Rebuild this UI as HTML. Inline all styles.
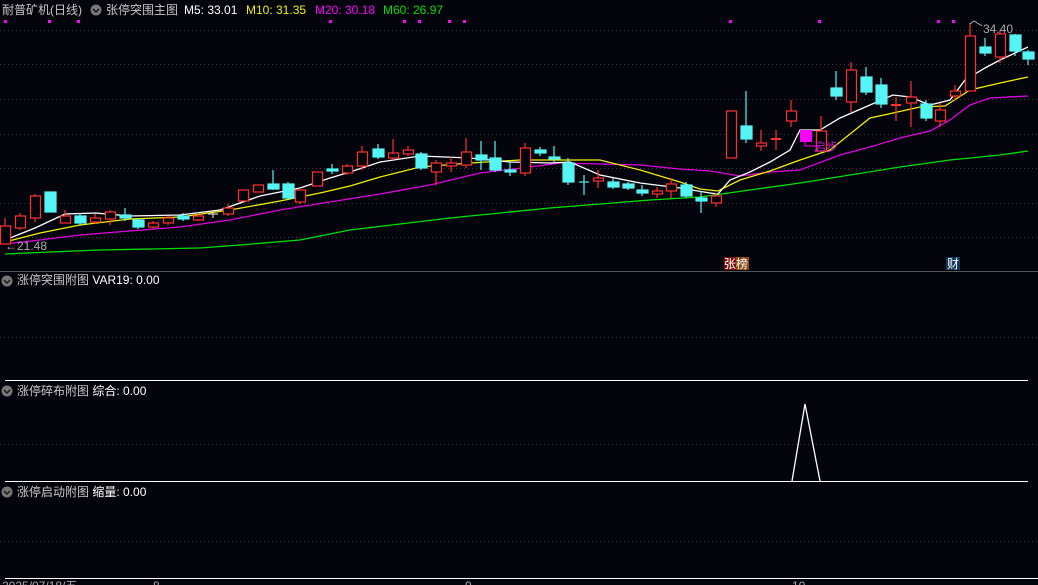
<!DOCTYPE html>
<html><head><meta charset="utf-8"><style>
html,body{margin:0;padding:0;background:#04040c;width:1038px;height:585px;overflow:hidden}
svg{display:block}
text{font-family:"Liberation Sans","Noto Sans CJK SC",sans-serif;font-size:12px}
</style></head><body>
<svg width="1038" height="585" viewBox="0 0 1038 585" xmlns="http://www.w3.org/2000/svg">
<rect width="1038" height="585" fill="#04040c"/>
<g stroke="#3a3a44" stroke-dasharray="1,3" stroke-width="1">
<line x1="0" y1="30.5" x2="1038" y2="30.5"/><line x1="0" y1="64.5" x2="1038" y2="64.5"/><line x1="0" y1="99.5" x2="1038" y2="99.5"/><line x1="0" y1="134.5" x2="1038" y2="134.5"/><line x1="0" y1="168.5" x2="1038" y2="168.5"/><line x1="0" y1="203.5" x2="1038" y2="203.5"/><line x1="0" y1="237.5" x2="1038" y2="237.5"/>
<line x1="0" y1="337.5" x2="1038" y2="337.5"/><line x1="0" y1="444.5" x2="1038" y2="444.5"/><line x1="0" y1="541.5" x2="1038" y2="541.5"/>
</g>
<line x1="0" y1="271.5" x2="1038" y2="271.5" stroke="#555"/>
<line x1="5" y1="380.5" x2="1028" y2="380.5" stroke="#fff"/>
<line x1="5" y1="481.5" x2="1028" y2="481.5" stroke="#fff"/>
<line x1="5" y1="578.5" x2="1038" y2="578.5" stroke="#fff"/>
<g fill="#ff00ff">
<rect x="4" y="20" width="3" height="3"/><rect x="48" y="20" width="3" height="3"/><rect x="77" y="20" width="3" height="3"/><rect x="329" y="20" width="3" height="3"/><rect x="403" y="20" width="3" height="3"/><rect x="418" y="20" width="3" height="3"/><rect x="448" y="20" width="3" height="3"/><rect x="463" y="20" width="3" height="3"/><rect x="729" y="20" width="3" height="3"/><rect x="818" y="20" width="3" height="3"/><rect x="937" y="20" width="3" height="3"/><rect x="952" y="20" width="3" height="3"/>
</g>
<g fill="none" stroke-width="1.3">
<polyline stroke="#00e000" points="5,254 50,252 100,250 150,249 200,248 240,245 300,240 350,230 400,224 450,218 500,213 550,208 600,204 650,200 700,197 750,190 800,183 850,175 900,167 950,160 1000,155 1028,151"/>
<polyline stroke="#e000e0" points="5,244 40,240 80,235 130,231 180,227 230,220 280,210 330,202 380,194 430,185 480,173 530,167 560,163 600,164 640,165 680,169 710,171 740,176 770,172 800,170 840,155 870,147 900,138 930,131 950,120 970,105 990,98 1028,96"/>
<polyline stroke="#f0f000" points="5,242 40,233 80,225 130,219 180,217 230,210 280,201 320,193 350,186 380,177 420,167 470,163 520,160 560,160 600,160 640,170 680,182 700,189 718,191 740,180 770,171 800,160 830,150 855,130 870,118 893,113 920,107 945,106 970,90 1000,83 1028,77"/>
<polyline stroke="#ffffff" points="5,240 35,228 65,214 95,213 130,216 180,215 220,210 260,196 300,188 330,178 350,172 380,162 420,156 470,158 510,162 550,163 570,162 600,175 640,183 680,188 710,193 718,194 730,180 750,172 770,162 790,150 800,130 820,130 840,118 870,105 893,95 910,97 930,105 950,100 965,80 985,68 1000,60 1028,47"/>
</g>
<g stroke="#ff3030" fill="#04040c" stroke-width="1.2">
<line x1="5" y1="218" x2="5" y2="226"/><rect x="0.5" y="226" width="10" height="18"/>
<line x1="20" y1="213" x2="20" y2="230"/><rect x="15.5" y="216" width="10" height="12"/>
<line x1="35" y1="194" x2="35" y2="222"/><rect x="30.5" y="196" width="10" height="22"/>
<line x1="65" y1="210" x2="65" y2="216"/><rect x="60.5" y="216" width="10" height="7"/>
<line x1="95" y1="214" x2="95" y2="224"/><rect x="90.5" y="218" width="10" height="4"/>
<line x1="110" y1="210" x2="110" y2="225"/><rect x="105.5" y="212" width="10" height="7"/>
<line x1="153" y1="221" x2="153" y2="228"/><rect x="148.5" y="223" width="10" height="4"/>
<line x1="168" y1="216" x2="168" y2="225"/><rect x="163.5" y="218" width="10" height="5"/>
<line x1="198" y1="214" x2="198" y2="221"/><rect x="193.5" y="216" width="10" height="4"/>
<line x1="228" y1="204" x2="228" y2="216"/><rect x="223.5" y="208" width="10" height="6"/>
<rect x="238.5" y="190" width="10" height="11"/>
<rect x="253.5" y="185" width="10" height="7"/>
<line x1="300" y1="188" x2="300" y2="204"/><rect x="295.5" y="190" width="10" height="12"/>
<rect x="312.5" y="172" width="10" height="14"/>
<line x1="347" y1="164" x2="347" y2="175"/><rect x="342.5" y="166" width="10" height="7"/>
<line x1="362" y1="146" x2="362" y2="170"/><rect x="357.5" y="152" width="10" height="14"/>
<line x1="393" y1="139" x2="393" y2="160"/><rect x="388.5" y="153" width="10" height="5"/>
<line x1="408" y1="146" x2="408" y2="156"/><rect x="403.5" y="150" width="10" height="4"/>
<line x1="436" y1="160" x2="436" y2="185"/><rect x="431.5" y="163" width="10" height="9"/>
<line x1="451" y1="157" x2="451" y2="172"/><rect x="446.5" y="163" width="10" height="3"/>
<line x1="466" y1="138" x2="466" y2="168"/><rect x="461.5" y="152" width="10" height="13"/>
<line x1="525" y1="143" x2="525" y2="176"/><rect x="520.5" y="148" width="10" height="25"/>
<line x1="598" y1="170" x2="598" y2="188"/><rect x="593.5" y="178" width="10" height="3"/>
<line x1="657" y1="187" x2="657" y2="198"/><rect x="652.5" y="191" width="10" height="3"/>
<line x1="671" y1="178" x2="671" y2="198"/><rect x="666.5" y="184" width="10" height="7"/>
<line x1="716" y1="193" x2="716" y2="207"/><rect x="711.5" y="196" width="10" height="7"/>
<rect x="726.5" y="111" width="10" height="47"/>
<line x1="761" y1="130" x2="761" y2="151"/><rect x="756.5" y="143" width="10" height="3"/>
<line x1="791" y1="100" x2="791" y2="127"/><rect x="786.5" y="111" width="10" height="10"/>
<line x1="821" y1="116" x2="821" y2="152"/><rect x="816.5" y="131" width="10" height="20"/>
<line x1="851" y1="62" x2="851" y2="112"/><rect x="846.5" y="70" width="10" height="32"/>
<line x1="911" y1="81" x2="911" y2="127"/><rect x="906.5" y="97" width="10" height="6"/>
<line x1="940" y1="103" x2="940" y2="127"/><rect x="935.5" y="110" width="10" height="11"/>
<line x1="955" y1="85" x2="955" y2="101"/><rect x="950.5" y="91" width="10" height="5"/>
<line x1="970" y1="23" x2="970" y2="36"/><rect x="965.5" y="36" width="10" height="55"/>
<line x1="1000" y1="30" x2="1000" y2="63"/><rect x="995.5" y="34" width="10" height="23"/>
<line x1="213" y1="210" x2="213" y2="218" stroke="#ccc"/><line x1="208" y1="214" x2="218" y2="214" stroke="#ccc"/>
<line x1="776" y1="130" x2="776" y2="150"/><line x1="771" y1="139" x2="781" y2="139" stroke-width="2"/>
<line x1="896" y1="97" x2="896" y2="121"/><line x1="891" y1="105" x2="901" y2="105" stroke-width="2"/>
</g>
<g stroke="#55f5f5" fill="#55f5f5" stroke-width="1.2">
<rect x="45" y="192" width="11" height="20"/>
<line x1="80" y1="213" x2="80" y2="226"/><rect x="75" y="216" width="11" height="7"/>
<line x1="125" y1="208" x2="125" y2="221"/><rect x="120" y="215" width="11" height="3"/>
<line x1="138" y1="218" x2="138" y2="229"/><rect x="133" y="220" width="11" height="7"/>
<line x1="183" y1="213" x2="183" y2="221"/><rect x="178" y="216" width="11" height="3"/>
<line x1="273" y1="170" x2="273" y2="190"/><rect x="268" y="184" width="11" height="5"/>
<line x1="288" y1="182" x2="288" y2="200"/><rect x="283" y="184" width="11" height="14"/>
<line x1="332" y1="164" x2="332" y2="174"/><rect x="327" y="169" width="11" height="2"/>
<line x1="378" y1="144" x2="378" y2="159"/><rect x="373" y="149" width="11" height="8"/>
<line x1="421" y1="152" x2="421" y2="170"/><rect x="416" y="154" width="11" height="14"/>
<line x1="481" y1="141" x2="481" y2="170"/><rect x="476" y="155" width="11" height="5"/>
<line x1="495" y1="141" x2="495" y2="172"/><rect x="490" y="158" width="11" height="12"/>
<line x1="510" y1="162" x2="510" y2="176"/><rect x="505" y="170" width="11" height="2"/>
<line x1="540" y1="147" x2="540" y2="156"/><rect x="535" y="150" width="11" height="3"/>
<line x1="554" y1="146" x2="554" y2="163"/><rect x="549" y="157" width="11" height="2"/>
<line x1="568" y1="158" x2="568" y2="185"/><rect x="563" y="163" width="11" height="19"/>
<line x1="584" y1="175" x2="584" y2="195"/><line x1="579" y1="182" x2="589" y2="182"/>
<line x1="613" y1="178" x2="613" y2="189"/><rect x="608" y="182" width="11" height="5"/>
<line x1="628" y1="182" x2="628" y2="190"/><rect x="623" y="184" width="11" height="4"/>
<line x1="642" y1="185" x2="642" y2="196"/><rect x="637" y="190" width="11" height="3"/>
<line x1="686" y1="182" x2="686" y2="198"/><rect x="681" y="185" width="11" height="11"/>
<line x1="701" y1="191" x2="701" y2="213"/><rect x="696" y="198" width="11" height="3"/>
<line x1="746" y1="91" x2="746" y2="143"/><rect x="741" y="126" width="11" height="13"/>
<line x1="836" y1="71" x2="836" y2="100"/><rect x="831" y="88" width="11" height="8"/>
<line x1="866" y1="67" x2="866" y2="95"/><rect x="861" y="77" width="11" height="15"/>
<line x1="881" y1="78" x2="881" y2="108"/><rect x="876" y="85" width="11" height="19"/>
<line x1="926" y1="100" x2="926" y2="121"/><rect x="921" y="104" width="11" height="14"/>
<line x1="985" y1="38" x2="985" y2="56"/><rect x="980" y="47" width="11" height="6"/>
<line x1="1015" y1="34" x2="1015" y2="56"/><rect x="1010" y="35" width="11" height="16"/>
<line x1="1028" y1="50" x2="1028" y2="65"/><rect x="1023" y="52" width="11" height="7"/>
</g>
<rect x="800" y="130" width="12" height="12" fill="#ff00ff"/>
<polyline points="805,142 805,146 820,146" fill="none" stroke="#ff00ff"/>
<text x="814" y="151" fill="#c020c0" font-size="11">启步</text>
<polyline points="792,481 805,404 820,481" fill="none" stroke="#fff" stroke-width="1.3"/>
<text x="5" y="250" fill="#aaaaaa">←21.48</text>
<polyline points="970,24 974,21 982,26" fill="none" stroke="#aaa"/>
<text x="983" y="33" fill="#aaaaaa">34.40</text>
<rect x="724" y="257" width="12" height="13" fill="#7a1010"/><rect x="736" y="257" width="13" height="13" fill="#8a4a10"/>
<text x="724" y="268" fill="#fff">张榜</text>
<rect x="946" y="257" width="14" height="13" fill="#10365a"/>
<text x="947" y="268" fill="#fff">财</text>
<g fill="#777"><circle cx="96" cy="10" r="5.5"/><circle cx="7" cy="281" r="5.5"/><circle cx="7" cy="391" r="5.5"/><circle cx="7" cy="492" r="5.5"/></g>
<g fill="none" stroke="#111" stroke-width="1.3"><polyline points="93,9 96,12 99,9"/><polyline points="4,280 7,283 10,280"/><polyline points="4,390 7,393 10,390"/><polyline points="4,491 7,494 10,491"/></g>
<text x="2" y="14" fill="#c8c8c8">耐普矿机(日线)</text>
<text x="106" y="14" fill="#c8c8c8">张停突围主图</text>
<text x="184" y="14" fill="#ffffff">M5: 33.01</text>
<text x="246" y="14" fill="#f0f000">M10: 31.35</text>
<text x="315" y="14" fill="#ff00ff">M20: 30.18</text>
<text x="383" y="14" fill="#00e000">M60: 26.97</text>
<text x="17" y="284" fill="#c8c8c8">涨停突围附图 <tspan fill="#fff">VAR19: 0.00</tspan></text>
<text x="17" y="395" fill="#c8c8c8">涨停碎布附图 <tspan fill="#fff">综合: 0.00</tspan></text>
<text x="17" y="496" fill="#c8c8c8">涨停启动附图 <tspan fill="#fff">缩量: 0.00</tspan></text>
<text x="2" y="590" fill="#aaa">2025/07/18/五</text>
<text x="153" y="590" fill="#aaa">8</text><text x="465" y="590" fill="#aaa">9</text><text x="792" y="590" fill="#aaa">10</text>
</svg>
</body></html>
